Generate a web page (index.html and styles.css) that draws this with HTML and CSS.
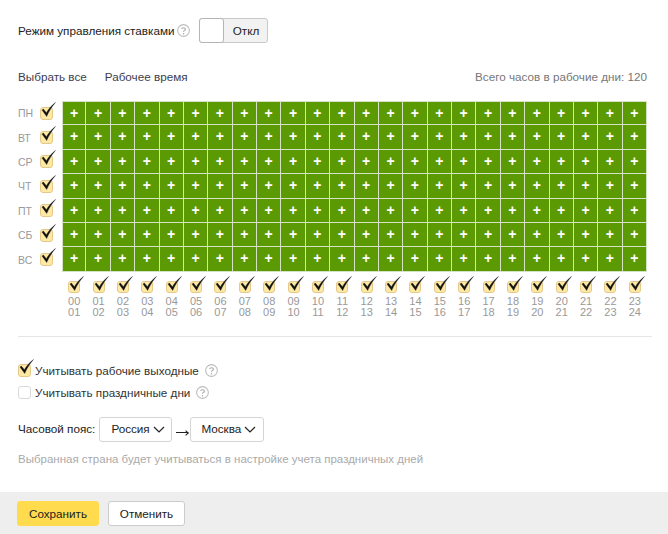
FILE: index.html
```html
<!DOCTYPE html>
<html lang="ru">
<head>
<meta charset="utf-8">
<title>Режим управления ставками</title>
<link rel="stylesheet" href="styles.css">
</head>
<body>
<svg class="defs" width="0" height="0" aria-hidden="true"><defs>
<symbol id="tick" viewBox="0 0 14 15"><path d="M0.9 7.6 L2.2 6.6 L5 10 C7 6.5 10 3 13.6 0.4 C10.5 3.8 7.5 8.5 5.3 13.6 Z" fill="#111" stroke="#111" stroke-width="0.3"/></symbol>
<symbol id="help" viewBox="0 0 12 12"><circle cx="6" cy="6" r="5.4" fill="none" stroke="#bdbdbd"/><path d="M4.3 4.7 C4.4 3 7.8 3 7.8 4.8 C7.8 6 6 5.8 6 7.2" fill="none" stroke="#a8a8a8"/><circle cx="6" cy="9" r=".7" fill="#a8a8a8"/></symbol>
<symbol id="chev" viewBox="0 0 12 7"><path d="M1 1 L6 6 L11 1" fill="none" stroke="#222" stroke-width="1.2"/></symbol>
</defs></svg>
<main class="content">
  <div class="mode">
    <span>Режим управления ставками</span>
    <svg class="help"><use href="#help"/></svg>
    <div class="toggle"><span class="knob"></span><span class="toggle-label">Откл</span></div>
  </div>
  <div class="links">
    <span class="link">Выбрать все</span>
    <span class="link">Рабочее время</span>
    <span class="total">Всего часов в рабочие дни: 120</span>
  </div>
  <div class="schedule" id="schedule"></div>
  <div class="hours" id="hours"></div>
  <hr class="rule">
  <label class="opt"><span class="box on"><svg class="tick"><use href="#tick"/></svg></span><span>Учитывать рабочие выходные</span><svg class="help"><use href="#help"/></svg></label>
  <label class="opt opt-second"><span class="box"></span><span>Учитывать праздничные дни</span><svg class="help"><use href="#help"/></svg></label>
  <div class="tz">
    <span>Часовой пояс:</span>
    <span class="select sel-country">Россия<svg class="chev"><use href="#chev"/></svg></span>
    <span class="arrow"></span>
    <span class="select sel-city">Москва<svg class="chev"><use href="#chev"/></svg></span>
  </div>
  <p class="hint">Выбранная страна будет учитываться в настройке учета праздничных дней</p>
</main>
<footer class="footer">
  <button class="btn primary">Сохранить</button>
  <button class="btn">Отменить</button>
</footer>
<script src="app.js"></script>
</body>
</html>
```
FILE: styles.css
```css
* { box-sizing: border-box; }
html, body { margin: 0; padding: 0; }
body {
  width: 668px; height: 534px; overflow: hidden; background: #fff;
  font: 11.7px/16px "Liberation Sans", Arial, sans-serif; color: #222;
  display: flex; flex-direction: column;
}
.defs { position: absolute; }
.content { flex: 1; padding: 18px 0 0 18px; }
.mode { display: flex; align-items: center; height: 25px; }
.help { width: 13px; height: 13px; margin-left: 3px; flex: none; }
.toggle {
  display: flex; width: 69px; height: 25px; margin-left: 9px;
  border: 1px solid #c9c9c9; border-radius: 3px; background: #f2f2f2;
}
.knob { width: 25px; margin: -1px 0 -1px -1px; background: #fff; border: 1px solid #b5b5b5; border-radius: 3px; }
.toggle-label { flex: 1; text-align: center; line-height: 23px; }
.links { display: flex; margin-top: 26px; width: 629px; height: 16px; color: #3c3e50; }
.link:nth-child(2) { margin-left: 18px; }
.total { margin-left: auto; color: #777; }
.schedule {
  display: grid; grid-template-columns: 44px repeat(24, 1fr); grid-auto-rows: 24.4px;
  margin-top: 16px; width: 629px;
}
.day { display: flex; align-items: center; color: #999; font-size: 10.5px; grid-column: 1; }
.day b { font-weight: normal; width: 22px; }
.cell {
  background: #5c9a04; color: #fff; border-right: 1px solid #d5e2c3; border-bottom: 1px solid #d5e2c3;
  text-align: center; font-size: 14px; font-weight: bold; line-height: 23px;
}
.cell.first-col { border-left: 1px solid #d5e2c3; }
.cell.first-row { border-top: 1px solid #d5e2c3; }
.box {
  position: relative; display: inline-block; flex: none; width: 13px; height: 13px;
  border: 1px solid #d9d9d9; border-radius: 3px; background: #fff;
}
.box.on { background: #fde9a4; border-color: #e4c98a; }
.tick { position: absolute; left: 0; top: -6px; width: 15px; height: 16px; }
.hours {
  display: grid; grid-template-columns: repeat(24, 1fr); margin: 4px 0 0 44px; width: 585px;
}
.hour { text-align: center; color: #999; font-size: 11px; line-height: 11.5px; }
.hour .box { display: block; width: 12px; height: 12px; margin: 5px auto 3px; }
.rule { border: 0; border-top: 1px solid #e6e6e6; margin: 17px 0 0; width: 634px; }
.opt { display: flex; align-items: center; height: 16px; margin-top: 26px; color: #333; }
.opt .box { margin-right: 4px; }
.opt-second { margin-top: 6px; }
.opt .help { margin-left: 6px; }
.tz { display: flex; align-items: center; margin-top: 16px; height: 25px; }
.select {
  display: flex; align-items: center; height: 25px; padding-left: 11px;
  border: 1px solid #d4d4d4; border-radius: 3px; margin-left: 4px;
}
.sel-country { width: 73px; }
.sel-city { width: 74px; margin-left: 2px; padding-left: 10px; }
.chev { width: 12px; height: 7px; margin-left: 3px; }
.arrow { position: relative; margin-left: 4px; width: 12px; height: 1px; background: #222; margin-top: 6px; }
.arrow::after {
  content: ""; position: absolute; right: 0; top: -1px; width: 3px; height: 3px;
  border-top: 1px solid #222; border-right: 1px solid #222; transform: rotate(45deg);
}
.hint { margin: 9px 0 0; color: #aaa; font-size: 11.5px; }
.footer { display: flex; align-items: center; gap: 9px; height: 42px; padding-left: 17px; background: #eeeeee; }
.btn {
  height: 25px; padding: 0; width: 77px; font: 11.7px "Liberation Sans", Arial, sans-serif; color: #222;
  background: #fff; border: 1px solid #ccc; border-radius: 3px;
}
.btn.primary { width: 82px; background: #ffdb4d; border-color: #ffdb4d; }
```
FILE: app.js
```js
var days = ['ПН','ВТ','СР','ЧТ','ПТ','СБ','ВС'];
var tick = '<span class="box on"><svg class="tick"><use href="#tick"/></svg></span>';
var html = '';
days.forEach(function (d, r) {
  html += '<div class="day"><b>' + d + '</b>' + tick + '</div>';
  for (var c = 0; c < 24; c++) {
    html += '<div class="cell' + (c === 0 ? ' first-col' : '') + (r === 0 ? ' first-row' : '') + '">+</div>';
  }
});
document.getElementById('schedule').innerHTML = html;
var h = '';
function p(n) { return (n < 10 ? '0' : '') + n; }
for (var i = 0; i < 24; i++) {
  h += '<div class="hour">' + tick + p(i) + '<br>' + p(i + 1) + '</div>';
}
document.getElementById('hours').innerHTML = h;
```
